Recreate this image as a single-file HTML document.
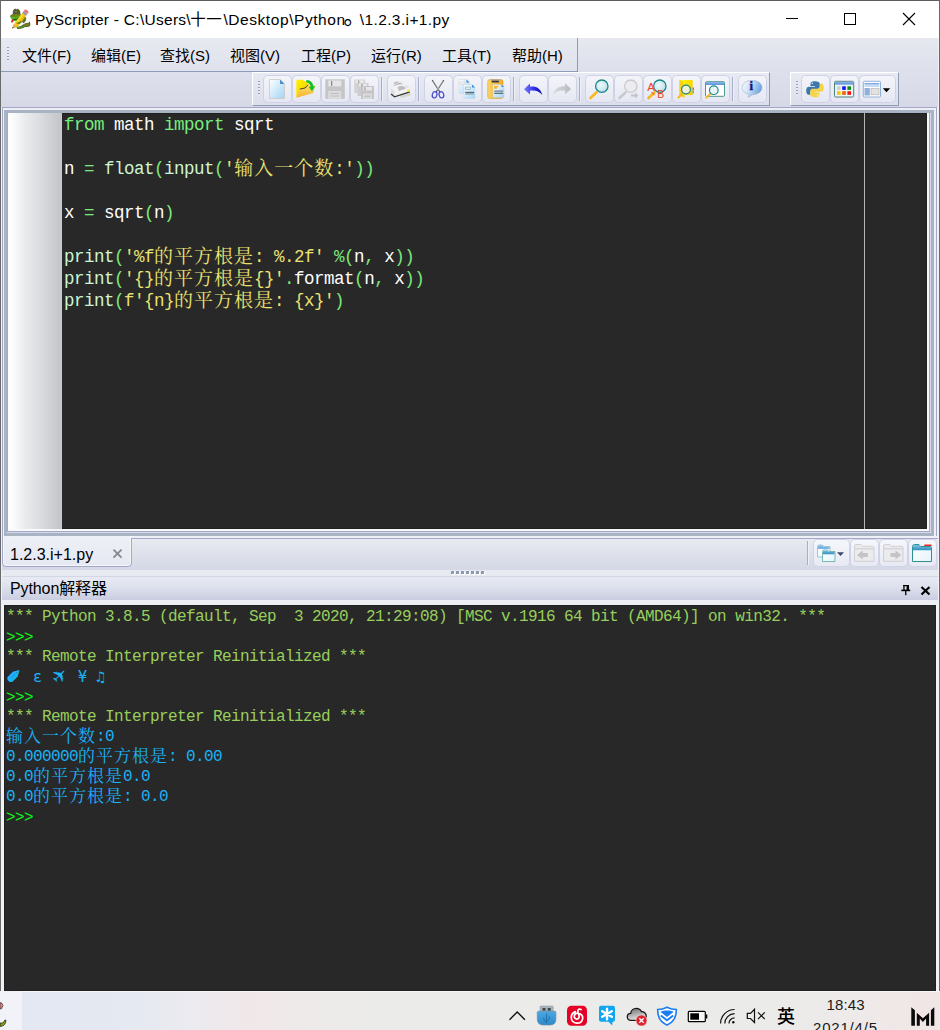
<!DOCTYPE html>
<html lang="zh-CN">
<head>
<meta charset="utf-8">
<title>PyScripter</title>
<style>
*{box-sizing:border-box;margin:0;padding:0}
html,body{width:940px;height:1030px;overflow:hidden;background:#fff}
body{position:relative;font-family:"Liberation Sans","Noto Sans CJK SC",sans-serif;font-size:15px;color:#000}
div,span.a{position:absolute}
#code span,#context span{position:static}
svg{position:absolute;left:0;top:0;overflow:visible}
/* window frame */
#wtop{left:0;top:0;width:940px;height:1px;background:#5c5c5c}
#wleft{left:0;top:0;width:1px;height:991px;background:#6a6a6a}
#wright{left:939px;top:0;width:1px;height:991px;background:#6a6a6a}
.tt{top:8.5px;height:22px;line-height:22px;font-size:15.500px;letter-spacing:0.370px;white-space:nowrap}
/* chrome */
#chrome{left:1px;top:38px;width:938px;height:953px;background:#f1f2f8}
#menubg{left:1px;top:38px;width:937px;height:69px;background:linear-gradient(#e7e9ef 0%,#e0e2ed 30%,#dcdeeb 60%,#d6d8e6 100%)}
#menubar{left:2px;top:38px;width:576px;height:34px;background:linear-gradient(#e8eaf1,#dfe1ed);border-right:1px solid #8f9bb5}
#menuline{left:1px;top:71px;width:577px;height:1px;background:#8d9bb6}
.menu{top:45px;height:22px;line-height:22px;font-size:15px;white-space:nowrap}
#toolarea{display:none}
.tbar{top:72px;height:34px;background:linear-gradient(#e8eaf3,#dcdfec);border-left:1px solid #fff;border-top:1px solid #fff;border-right:1px solid #8e9bb5;border-bottom:1px solid #8e9bb5}
.btn{top:75px;width:29px;height:28px;margin-left:-1px;border-radius:4.500px;background:linear-gradient(#f4f5fa,#e5e7f2);border:1px solid #cfd2e6}
.sep{top:77px;width:1px;height:24px;background:#a6aecb;box-shadow:1px 0 0 #eef0f7}
.grip{width:2px;height:14px;margin-top:-1px;background:repeating-linear-gradient(#9fa4c0 0,#8388a8 1.5px,rgba(255,255,255,0.35) 1.5px,rgba(255,255,255,0) 3px)}
/* editor */
#edouter{left:2px;top:107px;width:935px;height:429px;border:1px solid #a3a7c9;border-bottom:none;background:#eef0f5}
#edwhite{left:2px;top:536px;width:936px;height:2px;background:#eef0f5}
#edbot{left:132px;top:538px;width:806px;height:1px;background:#a3a7c9}
#edband{left:4px;top:110px;width:930px;height:426px;background:#a8b4c4}
#edinset{left:7px;top:113px;width:924px;height:420px;background:#d7d9e6}
#edline{left:7px;top:113px;width:923px;height:419px;border-right:1px solid #a3a7c9;border-bottom:1px solid #a3a7c9;border-left:1px solid #a3a7c9;background:#f7f9fd}
#edinner{left:8px;top:113px;width:919px;height:416px;background:#282828;box-shadow:inset 0 0 0 1px rgba(0,0,0,0.180)}
#gutter{left:0;top:0;width:54px;height:416px;background:linear-gradient(90deg,#fff 0%,#fcfcfd 8%,#eaeced 30%,#d9dbde 62%,#c3c6c9 98%,#cbd0d4 100%)}
#margin{left:856px;top:0;width:1px;height:416px;background:#b4b4b4}
#code{left:56px;top:1px;font-family:"Liberation Mono","Noto Serif CJK SC",monospace;font-size:17.5px;letter-spacing:-0.5px;line-height:22px;color:#fff;white-space:pre}
#code .c{font-family:"Noto Serif CJK SC",serif;font-size:19px;letter-spacing:1px;line-height:0;position:relative;top:0.5px}
.k{color:#78ee80}.s{color:#ebe272}.p{color:#7ce87a}.f{color:#cdf5d2}
/* tabs */
#tabbar{left:2px;top:539px;width:936px;height:31px;background:linear-gradient(#e9ebf1,#e1e3ed 35%,#d4d7e5)}
#tab{left:2px;top:536px;width:130px;height:31px;background:linear-gradient(#eef0f6,#e6e8f2);border:1px solid #a3a7c9;border-top:none;border-radius:0 0 4.500px 4.500px;box-shadow:inset 1px -1px 0 rgba(255,255,255,0.55),inset -1px 0 0 rgba(255,255,255,0.55)}
#tabcap{left:131px;top:536px;width:1px;height:2px;background:#eef0f5}
#tabtxt{left:10px;top:544px;height:22px;line-height:22px;font-size:16px;white-space:nowrap}
.tbtn{top:539px;width:29px;height:28px;margin-left:-1px;border-radius:4.500px;background:linear-gradient(#f6f7fb,#e7e9f3);border:1px solid #d0d3e7}
#splitter{left:2px;top:570px;width:936px;height:7px;background:#e8eaf1;border-bottom:1px solid #d3d6e5}
#conhead{left:2px;top:577px;width:936px;height:23px;background:linear-gradient(#e8eaf3,#dfe2ee 40%,#c9cde0)}
#conhead2{left:2px;top:600px;width:936px;height:5px;background:#eceef4}
#contitle{left:10px;top:578px;height:22px;line-height:22px;font-size:16px;letter-spacing:-0.1px;white-space:nowrap}
#console{left:4px;top:605px;width:932px;height:386px;background:#282828;box-shadow:inset 0 0 0 1px rgba(0,0,0,0.180)}
#context{left:2px;top:2px;font-family:"Liberation Mono","Noto Serif CJK SC",monospace;font-size:16px;letter-spacing:-0.6px;line-height:20px;white-space:pre;color:#98cf5c}
#context .c{font-family:"Noto Serif CJK SC",serif;font-size:17px;letter-spacing:1px;line-height:0;position:relative;top:0.5px}
#context .w{display:inline-block;width:18px;height:20px;letter-spacing:0;font-family:"DejaVu Sans",sans-serif;font-size:16px;line-height:20px;vertical-align:top}
#context .n{display:inline-block;width:9px;height:20px;letter-spacing:0;font-family:"DejaVu Sans Mono","DejaVu Sans",monospace;font-size:15px;line-height:20px;vertical-align:top}
.o{color:#1ab2f8}.g{color:#0cf814;position:relative !important;top:1px}
/* taskbar */
#taskbar{left:0;top:991px;width:940px;height:39px;box-shadow:inset 0 1px 0 rgba(255,255,255,0.600);background:linear-gradient(90deg,#e3e8f2 0,#e3e8f2 60px,#e5e9f1 130px,#ebebf0 190px,#f1e7e9 250px,#eeeaea 300px,#ebebe9 380px,#ebebe9 780px,#eeeae9 860px,#f1e6e6 920px,#f1e6e6 940px)}
#tkleft{left:0;top:991px;width:22px;height:39px;background:#f1f3f9}
.tk{font-size:15px;white-space:nowrap;color:#1a1a1a}
</style>
</head>
<body>
<div class="tt" style="left:35px;letter-spacing:0.276px">PyScripter - C:\Users\</div><div class="tt" style="left:190.200px;letter-spacing:0.600px">十一</div><div class="tt" style="left:223.400px;letter-spacing:0.571px">\Desktop\Python</div><div class="tt" style="left:343.500px;font-size:22px;top:5.500px">。</div><div class="tt" style="left:359.800px;letter-spacing:0.383px">\1.2.3.i+1.py</div>
<div id="chrome"></div>
<div id="menubg"></div>
<div id="toolarea"></div>
<div id="menubar"></div>
<div id="menuline"></div>
<div class="grip" style="left:7px;top:48px"></div>
<div class="menu" style="left:22px">文件(F)</div>
<div class="menu" style="left:91px">编辑(E)</div>
<div class="menu" style="left:160px">查找(S)</div>
<div class="menu" style="left:230px">视图(V)</div>
<div class="menu" style="left:301px">工程(P)</div>
<div class="menu" style="left:371px">运行(R)</div>
<div class="menu" style="left:442px">工具(T)</div>
<div class="menu" style="left:512px">帮助(H)</div>

<div class="tbar" style="left:252px;width:518px"></div>
<div class="grip" style="left:258px;top:82px"></div>
<div class="btn" style="left:264px"></div>
<div class="btn" style="left:293px"></div>
<div class="btn" style="left:322px"></div>
<div class="btn" style="left:351px"></div>
<div class="sep" style="left:381px"></div>
<div class="btn" style="left:388px"></div>
<div class="sep" style="left:418px"></div>
<div class="btn" style="left:425px"></div>
<div class="btn" style="left:454px"></div>
<div class="btn" style="left:483px"></div>
<div class="sep" style="left:513px"></div>
<div class="btn" style="left:520px"></div>
<div class="btn" style="left:549px"></div>
<div class="sep" style="left:579px"></div>
<div class="btn" style="left:586px"></div>
<div class="btn" style="left:615px"></div>
<div class="btn" style="left:644px"></div>
<div class="btn" style="left:673px"></div>
<div class="btn" style="left:702px"></div>
<div class="sep" style="left:732px"></div>
<div class="btn" style="left:739px"></div>

<div class="tbar" style="left:790px;width:109px"></div>
<div class="grip" style="left:796px;top:82px"></div>
<div class="btn" style="left:802px"></div>
<div class="btn" style="left:831px"></div>
<div class="btn" style="left:860px;width:37px"></div>
<svg width="940" height="40" viewBox="0 0 940 40" style="top:0">
<!-- app icon: snake with pencil -->
<g id="i-app">
<path d="M17.200 26.800c2 0.600 4 -0.300 5.800 -1.800 1.500 -1.300 3.500 -1.800 5.300 -1.500 0.800 0 1 -0.800 0.900 -1.700 0.800 1.200 1 3.300 0.200 4.300-1.500 0.900-3.200 0-4.700 0.700-2 1.300-5 2-7.700 1.400z" fill="#70801a" stroke="#222a06" stroke-width="0.600"/>
<path d="M17.300 27.200c2.300 0.300 4.500 -0.300 6.500 -1.500l0 1.300c-2 1.200-4.500 1.500-6.700 1z" fill="#3aa81a"/>
<path d="M23 16c1.500 0 2.800 1.200 2.800 3 0 1.800-1 3.200-2.300 4l-1.500 -1.500z" fill="#6c7a16" stroke="#222a06" stroke-width="0.400"/>
<path d="M13.200 13.700c-0.200 -2.300 0.300 -4.300 1.800 -4.600 0.700 -0.200 1.200 0.200 1.500 0.600 0.500 -0.500 1.300 -0.700 2 -0.300 1.200 0.700 1.500 2.500 1.600 4.300z" fill="#59661a" stroke="#222a06" stroke-width="0.500"/>
<rect x="14" y="11" width="1.500" height="2" fill="#8d93ac"/><rect x="16.600" y="11" width="1.500" height="2" fill="#8d93ac"/><rect x="14.600" y="11" width="0.600" height="2" fill="#16162c"/><rect x="17.200" y="11" width="0.600" height="2" fill="#16162c"/>
<path d="M10.200 16.300c1 -2 4 -2.800 6.500 -2.800 1.700 0 3.300 0.300 4 1.200l0.300 2.300c-3.300 1.300-7.800 1.500-10.800 -0.700z" fill="#76841c" stroke="#222a06" stroke-width="0.400"/>
<path d="M10.200 16.300c2.800 1.700 7.300 1.300 10.600 -0.700l0.500 2.600c-1 2-3.300 3-5.800 3-2.800 0-5 -1.800-5.300 -4.900z" fill="#48c422"/>
<path d="M13.500 19.200c1.800 0.500 3.800 0 5.300 -1.200" stroke="#162006" stroke-width="0.900" fill="none"/>
<path d="M10.800 21.800l1.800 -2.700 1.800 0.700-2 2.900z" fill="#d22626"/>
<path d="M12.200 28.500l1.600 -4.200 8.400 -11.300 3.800 2.700-8.400 11.200z" fill="#efbc10"/>
<path d="M14.300 23.900l8.200 -10.900 1.700 1.200-8.300 11z" fill="#f4dc24"/>
<path d="M12.200 28.500l1.600 -4.200 2.600 1.900z" fill="#e2a874"/><path d="M12.200 28.500l0.600 -1.500 0.900 0.700z" fill="#0c0c0c"/>
<path d="M22.200 13l1.300 -1.700 3.800 2.700-1.300 1.700z" fill="#9494a2"/>
<path d="M23.500 11.300l1.200 -1.600c1.500 -0.500 3.500 0.800 3.800 2.700l-1.200 1.600z" fill="#e87480"/>
<path d="M16.500 22.300c1.600 0.600 3.200 0 4.200 -1.500l1.300 1.200c-1.200 1.800-3.500 2.600-5.500 1.600z" fill="#70801a"/>
</g>
<!-- window buttons -->
<rect x="786" y="18" width="12" height="1" fill="#000"/>
<rect x="844.500" y="13.500" width="11" height="11" fill="none" stroke="#000" stroke-width="1"/>
<path d="M903 13l12 12M915 13l-12 12" stroke="#000" stroke-width="1.100" fill="none"/>
</svg>
<svg width="940" height="110" viewBox="0 0 940 110" style="top:0">
<defs>
<linearGradient id="gdoc" x1="0" y1="0" x2="1" y2="1"><stop offset="0" stop-color="#ffffff"/><stop offset="1" stop-color="#9fd4f6"/></linearGradient>
<linearGradient id="gfold" x1="0" y1="0" x2="0" y2="1"><stop offset="0" stop-color="#fde070"/><stop offset="1" stop-color="#f5b22c"/></linearGradient>
<linearGradient id="gfoldb" x1="0" y1="0" x2="1" y2="1"><stop offset="0" stop-color="#fff200"/><stop offset="1" stop-color="#f5c800"/></linearGradient>
<radialGradient id="glens" cx="0.4" cy="0.4" r="0.7"><stop offset="0" stop-color="#eef8fb"/><stop offset="1" stop-color="#b5dde8"/></radialGradient>
<linearGradient id="gundo" x1="0" y1="0" x2="1" y2="0"><stop offset="0" stop-color="#7b7bff"/><stop offset="0.6" stop-color="#2a2ae8"/><stop offset="1" stop-color="#0808a8"/></linearGradient>
<linearGradient id="gredo" x1="0" y1="0" x2="1" y2="0"><stop offset="0" stop-color="#dedee2"/><stop offset="1" stop-color="#b9b9bd"/></linearGradient>
<linearGradient id="ginfo" x1="0" y1="0" x2="1" y2="0.3"><stop offset="0" stop-color="#ffffff"/><stop offset="0.5" stop-color="#c7ddf3"/><stop offset="1" stop-color="#6ea6e0"/></linearGradient>
<linearGradient id="gclip" x1="0" y1="0" x2="1" y2="0"><stop offset="0" stop-color="#fbd468"/><stop offset="1" stop-color="#f2a81c"/></linearGradient>
<linearGradient id="gtitle" x1="0" y1="0" x2="0" y2="1"><stop offset="0" stop-color="#8db8ee"/><stop offset="1" stop-color="#5a8fd6"/></linearGradient>
</defs>
<!-- new -->
<g id="i-new"><path d="M269.5 79.5h10.5l4.5 4.5v14.5h-15z" fill="url(#gdoc)" stroke="#cfc8c0" stroke-width="0.8"/><path d="M280 79.5l4.5 4.5h-4.5z" fill="#4a8fd8"/></g>
<!-- open -->
<g id="i-open"><path d="M296.300 80.500l0.800 -0.800h5.800l1.500 1.500h4v8l-8 2-4.100 6.400z" fill="url(#gfoldb)"/><path d="M296.300 97.800l3.500 -8.700 5.200 -1.100 3.200 -3 6.800 0-1.500 8-17.200 4.800z" fill="url(#gfold)"/><path d="M299.800 89.100l5.200 -1.100 3.200 -3" fill="none" stroke="#3a3020" stroke-width="0.900"/><path d="M306.500 79.900c4.200 0.200 6.700 3 6.800 6.300h1.900l-3.200 5-3.300 -4.500h1.900c-0.200 -2.300-1.700 -4.200-4.400 -4.800z" fill="#12c224"/></g>
<!-- save (disabled) -->
<g id="i-save"><rect x="325.300" y="79.300" width="19.500" height="19.500" fill="#c5c5c7"/><rect x="328.300" y="80.500" width="13" height="5.800" fill="#e6e6e8"/><rect x="331" y="81" width="1.300" height="4.800" fill="#8c8c8e"/><rect x="328.300" y="91" width="13" height="7.800" fill="#dcdcde"/><rect x="330.300" y="93" width="9" height="1" fill="#bdbdbf"/><rect x="330.300" y="95.500" width="9" height="1" fill="#bdbdbf"/></g>
<!-- save all (disabled) -->
<g id="i-saveall"><rect x="354.200" y="79.500" width="11" height="13.500" fill="#d3d3d5"/><rect x="355.500" y="80.300" width="8" height="2.500" fill="#ececee"/><rect x="357.500" y="83" width="11" height="13" fill="#cdcdcf"/><rect x="358.800" y="83.800" width="8" height="2.500" fill="#eaeaec"/><rect x="358.200" y="80.500" width="1" height="2.300" fill="#8c8c8e"/><rect x="361" y="86" width="13" height="13" fill="#c5c5c7"/><rect x="363" y="87" width="9" height="3.500" fill="#e6e6e8"/><rect x="361.500" y="84" width="1" height="2.300" fill="#8c8c8e"/><rect x="364.500" y="87.300" width="1" height="3" fill="#8c8c8e"/><rect x="363" y="93.500" width="9" height="5.500" fill="#dcdcde"/><rect x="364.500" y="95.500" width="6" height="1.800" fill="#c2c2c4"/></g>
<!-- print -->
<g id="i-print"><path d="M393.500 82.500l3.500 -1.300 5.500 1.800 0 3.500-9 0z" fill="#dcdcde"/><path d="M394 83.300l4 -1.300M396 84.800l5 -1.800M394.500 86l4 -1.500M399 86l3 -1" stroke="#a6a6aa" stroke-width="0.800" fill="none"/><path d="M391 88.500l6 -3.800 8.500 0.300 4 2 0 4.800-15 4.800-3.500 -2.600z" fill="#f2f2f3"/><path d="M391 88.500l3.500 2.200 0 6-3.500 -2.600z" fill="#dededf"/><path d="M397.500 87.300c2 -1.500 5.500 -1.700 7.500 -0.300l0.500 2.500-6.500 2z" fill="#bfbfc2"/><path d="M405 85l4.500 2 0 2.500-3.500 1z" fill="#e2e2e4"/><path d="M399 91.500l6.500 -2 3.500 -1.300" stroke="#fff" stroke-width="0.800" fill="none"/><path d="M399.500 95.300l10.500 -3.300 0.800 3.300-9.300 2.700z" fill="#d2d6ce"/><path d="M391 94.100l3.500 2.700 15.300 -4.900" stroke="#38383a" stroke-width="1.200" fill="none"/><rect x="407.500" y="89.700" width="2.300" height="1.900" fill="#f4ec18"/></g>
<!-- cut -->
<g id="i-cut"><path d="M432.200 80l8 12.500M443.800 80l-8 12.500" stroke="#55555a" stroke-width="1.300" fill="none"/><path d="M433.500 81l5.500 9M442.500 81l-5.500 9" stroke="#d8d8dc" stroke-width="0.600" fill="none"/><ellipse cx="434.600" cy="94.800" rx="2.300" ry="3.200" transform="rotate(15 434.600 94.800)" fill="none" stroke="#4444cc" stroke-width="1.200"/><ellipse cx="441.400" cy="94.800" rx="2.300" ry="3.200" transform="rotate(-15 441.400 94.800)" fill="none" stroke="#4444cc" stroke-width="1.200"/></g>
<!-- copy -->
<g id="i-copy"><path d="M459 79.500h7.500l3 3v11h-10.500z" fill="url(#gdoc)" stroke="#d2d2d2" stroke-width="0.500"/><path d="M466.500 79.500l3 3h-3z" fill="#3f86d6"/><rect x="460" y="82" width="5" height="2.500" fill="#f4f4f4" stroke="#c0c0c0" stroke-width="0.400"/><path d="M464 84.500h8l3 3v11h-11z" fill="url(#gdoc)" stroke="#c4d4e0" stroke-width="0.500"/><path d="M472 84.500l3 3h-3z" fill="#3f86d6"/><rect x="465.500" y="87" width="5" height="2.500" fill="#d8eef8" stroke="#7a9aa8" stroke-width="0.500"/><rect x="465.200" y="91.800" width="8.800" height="1.600" fill="#5a6a74"/><rect x="465.200" y="94" width="8.800" height="0.800" fill="#9fb6c2"/></g>
<!-- paste -->
<g id="i-paste"><rect x="487.700" y="79.500" width="15.300" height="19" rx="2" fill="url(#gclip)" stroke="#d99a20" stroke-width="0.500"/><rect x="491.500" y="80.300" width="7.500" height="2.200" rx="0.800" fill="#3c3c3c"/><rect x="490.800" y="79" width="9" height="1.500" fill="#b8b098"/><path d="M493 84.500h8.500l2.500 2.500v10.500h-11z" fill="url(#gdoc)" stroke="#b9cad6" stroke-width="0.500"/><path d="M501.500 84.500l2.500 2.500h-2.500z" fill="#3f86d6"/><path d="M494 85.800h4.500v1.500h-1.500v1.500h-3z" fill="#f6b62c"/><rect x="494.200" y="90.500" width="9" height="1.200" fill="#6a7a84"/><rect x="494.200" y="92.700" width="9" height="1.200" fill="#55656f"/></g>
<!-- undo / redo -->
<g id="i-undo"><path d="M524 89.300l6 -5.800v3.200c6 -0.800 10.500 1.500 12.300 8.300-3 -3.800-7 -4.800-12.300 -4.300v3.800z" fill="url(#gundo)"/></g>
<g id="i-redo"><path d="M571 89l-6 -6v3.300c-6 -0.800-10.500 2-12.500 9.500 3 -4.500 7 -5.800 12.500 -5.300v3.800z" fill="url(#gredo)"/></g>
<!-- find -->
<g id="i-find"><path d="M596.500 92.500l-6 5.500" stroke="#f7b81e" stroke-width="2.600" stroke-linecap="round"/><circle cx="601.800" cy="86.200" r="6.200" fill="url(#glens)" stroke="#1b8a86" stroke-width="1.300"/></g>
<!-- find next (disabled) -->
<g id="i-findnext"><path d="M625.500 92.500l-6 5.500" stroke="#c9c9cd" stroke-width="2.600" stroke-linecap="round"/><circle cx="630.800" cy="86.200" r="6.200" fill="#ececf0" stroke="#cbcbcf" stroke-width="1.300"/><path d="M631 94.500h4v-2l3.500 3-3.500 3v-2h-4z" fill="#c4c4c8"/></g>
<!-- replace -->
<g id="i-repl"><path d="M654.500 92.500l-6 5.500" stroke="#f7b81e" stroke-width="2.600" stroke-linecap="round"/><circle cx="659.800" cy="86.200" r="6.200" fill="url(#glens)" stroke="#1b8a86" stroke-width="1.300"/><text x="647.300" y="91.300" font-family="Liberation Sans, sans-serif" font-size="11.500" fill="#f2401c">A</text><text x="657.300" y="98.300" font-family="Liberation Sans, sans-serif" font-size="10.500" fill="#f2401c">B</text><path d="M651.500 92l3 3.200" stroke="#f2401c" stroke-width="1" fill="none"/></g>
<!-- find in files -->
<g id="i-fif"><path d="M679.300 79.800l5.300 1.500 0 16.500-5.300 -2z" fill="#f8d018"/><path d="M682.500 80h10.200v15h-8z" fill="url(#gfoldb)"/><rect x="692.700" y="87.500" width="1" height="3" fill="#4a4ab0"/><rect x="692.700" y="91" width="1" height="2.500" fill="#10a0b0"/><path d="M682.500 93.500l-4 4" stroke="#f7b81e" stroke-width="2" stroke-linecap="round"/><circle cx="686" cy="89.500" r="4.400" fill="#f1f3d8" stroke="#1b8a86" stroke-width="1.200"/></g>
<!-- find in window -->
<g id="i-fiw"><rect x="705.500" y="81.700" width="19" height="14.600" rx="1" fill="#fff" stroke="#3c8c86" stroke-width="0.900"/><rect x="706" y="82" width="18" height="3" fill="url(#gtitle)"/><path d="M710.300 93.800l-3.800 3.800" stroke="#f7b81e" stroke-width="2" stroke-linecap="round"/><circle cx="713.800" cy="90.200" r="4.300" fill="#e9f4f8" stroke="#1b8a86" stroke-width="1.200"/></g>
<!-- info -->
<g id="i-info"><path d="M752 80.300c5.800 0 10 3.200 10 7.300 0 3.800-3.800 7-9.500 7.200l-4.300 2.500 0.800 -3c-4 -0.800-6.800 -3.500-6.800 -6.700 0 -4.100 4 -7.300 9.800 -7.300z" fill="url(#ginfo)" stroke="#9ab4d0" stroke-width="0.600"/><text x="749.500" y="90.300" font-family="Liberation Serif, serif" font-weight="bold" font-size="12.500" fill="#12128c" stroke="#12128c" stroke-width="0.500">i</text></g>
<!-- python -->
<g id="i-py"><path d="M814.700 81.200c-3.500 0-4.200 1.500-4.200 2.800v2h4.500v0.800h-6.200c-1.600 0-2.600 1.400-2.600 4 0 2.700 1 4 2.500 4h1.600v-2.300c0-1.600 1.300 -2.800 2.800 -2.800h4.400c1.300 0 2.300 -1 2.300 -2.300v-3.400c0 -1.500-1.500 -2.800-5.100 -2.800z" fill="#3a78ad"/><circle cx="812.300" cy="83.300" r="0.800" fill="#e8eef4"/><path d="M815.300 97.300c3.500 0 4.200 -1.500 4.200 -2.800v-2h-4.500v-0.800h6.200c1.600 0 2.600 -1.400 2.600 -4 0 -2.700-1 -4-2.500 -4h-1.600v2.300c0 1.600-1.300 2.800-2.800 2.800h-4.400c-1.300 0-2.300 1-2.300 2.300v3.400c0 1.500 1.500 2.800 5.100 2.800z" fill="#f6d44a"/><circle cx="817.700" cy="95.200" r="0.800" fill="#fdf6d0"/></g>
<!-- palette -->
<g id="i-pal"><rect x="834.500" y="81.300" width="19.200" height="15.700" rx="1.200" fill="#eef4f4" stroke="#4f7f80" stroke-width="1"/><rect x="835" y="81.800" width="18.200" height="2.800" fill="url(#gtitle)"/><rect x="837" y="86.300" width="3.600" height="3.600" fill="#cfcfcf"/><rect x="842.200" y="86.300" width="3.600" height="3.600" fill="#1414f0"/><rect x="847.400" y="86.300" width="3.600" height="3.600" fill="#0a8a1e"/><rect x="837" y="91.200" width="3.600" height="3.600" fill="#fcc800"/><rect x="842.200" y="91.200" width="3.600" height="3.600" fill="#e86008"/><rect x="847.400" y="91.200" width="3.600" height="3.600" fill="#f01414"/></g>
<!-- layout -->
<g id="i-lay"><rect x="863.300" y="81.300" width="17.200" height="15.700" rx="1" fill="#fff" stroke="#8fb0d8" stroke-width="1"/><rect x="864.500" y="83" width="14.800" height="1.600" fill="#7fa8e4"/><rect x="864.500" y="85.300" width="14.800" height="1.500" fill="#b4cff2"/><rect x="864.500" y="88" width="5.300" height="7.500" fill="#8fb0dc"/><rect x="871" y="88.300" width="8" height="6.500" fill="#e2e2e2" stroke="#b4b4b4" stroke-width="0.700"/><path d="M882.800 88.300h7.400l-3.700 3.900z" fill="#000"/></g>
</svg>
<div id="edouter"></div>
<div id="edwhite"></div>
<div id="edbot"></div>
<div id="edband"></div>
<div id="edinset"></div>
<div id="edline"></div>
<div id="edinner">
<div id="gutter"></div>
<div id="margin"></div>
<div id="code"><span class="k">from</span> math <span class="k">import</span> sqrt

n <span class="p">=</span> <span class="f">float</span><span class="p">(</span><span class="f">input</span><span class="p">(</span><span class="s">'<span class="c">输入一个数</span>:'</span><span class="p">))</span>

x <span class="p">=</span> sqrt<span class="p">(</span>n<span class="p">)</span>

<span class="f">print</span><span class="p">(</span><span class="s">'%f<span class="c">的平方根是</span>: %.2f'</span> <span class="p">%(</span>n<span class="p">,</span> x<span class="p">))</span>
<span class="f">print</span><span class="p">(</span><span class="s">'{}<span class="c">的平方根是</span>{}'</span><span class="p">.</span>format<span class="p">(</span>n<span class="p">,</span> x<span class="p">))</span>
<span class="f">print</span><span class="p">(</span><span class="s">f'{n}<span class="c">的平方根是</span>: {x}'</span><span class="p">)</span></div>
</div>
<div id="tabbar"></div>
<div id="tab"></div>
<div id="tabcap"></div>
<div id="tabtxt">1.2.3.i+1.py</div>
<div class="sep" style="left:807px;top:541px"></div>
<div class="tbtn" style="left:814px;width:37px"></div>
<div class="tbtn" style="left:851px"></div>
<div class="tbtn" style="left:880px"></div>
<div class="tbtn" style="left:909px"></div>
<div id="splitter"></div>
<div id="conhead"></div>
<div id="conhead2"></div>
<div id="contitle">Python解释器</div>
<div id="console">
<div id="context">*** Python 3.8.5 (default, Sep  3 2020, 21:29:08) [MSC v.1916 64 bit (AMD64)] on win32. ***
<span class="g">&gt;&gt;&gt;</span>
*** Remote Interpreter Reinitialized ***
<span class="o"><span class="w" style="font-size:17px;font-weight:bold;-webkit-text-stroke:0.9px #1ab2f8;position:relative;left:0.5px;top:-0.5px">✐</span> <span class="n">ε</span> <span class="w" style="transform:translate(3px,-2px) rotate(-45deg) scale(1.15);transform-origin:8px 11px">✈</span> <span class="n">¥</span> <span class="n">♫</span></span>
<span class="g">&gt;&gt;&gt;</span>
*** Remote Interpreter Reinitialized ***
<span class="o"><span class="c">输入一个数</span>:0</span>
<span class="o">0.000000<span class="c">的平方根是</span>: 0.00</span>
<span class="o">0.0<span class="c">的平方根是</span>0.0</span>
<span class="o">0.0<span class="c">的平方根是</span>: 0.0</span>
<span class="g">&gt;&gt;&gt;</span></div>
</div>
<svg width="940" height="70" viewBox="0 536 940 70" style="top:536px">
<defs>
<linearGradient id="gwin" x1="0" y1="0" x2="1" y2="1"><stop offset="0" stop-color="#ffffff"/><stop offset="1" stop-color="#e4f4fb"/></linearGradient>
<linearGradient id="gwt" x1="0" y1="0" x2="0" y2="1"><stop offset="0" stop-color="#7fc0ee"/><stop offset="1" stop-color="#2f8fb8"/></linearGradient>
</defs>
<!-- tab close x -->
<path d="M113.500 549.700l8 8M121.500 549.700l-8 8" stroke="#8a8a8c" stroke-width="1.900" fill="none"/>
<!-- window list -->
<g><path d="M817.500 546.500q0 -1.500 1.500 -1.500h3.500l1.500 1.500h6v10.500h-12.500z" fill="url(#gwin)" stroke="#8fb8c8" stroke-width="0.800"/><path d="M818 546.500q0 -1 1 -1h3.500l1.500 1.500h5.500v2h-11.500z" fill="#79b4e4"/><path d="M822.500 551.500q0 -1.500 1.500 -1.500h3.500l1.500 1.500h6v10h-12.500z" fill="url(#gwin)" stroke="#5aa8a2" stroke-width="0.800"/><path d="M823 551.500q0 -1 1 -1h3.500l1.500 1.500h5.500v2.200h-11.500z" fill="url(#gwt)"/><path d="M837 552.300h7l-3.500 3.700z" fill="#43466c"/></g>
<!-- back (disabled) -->
<g><path d="M854.500 546q0 -1.500 1.500 -1.500h5l1.500 1.800h10.500q1 0 1 1v14h-19.500z" fill="#ebebee" stroke="#cdcdd1" stroke-width="0.900"/><path d="M855 548.800h19" stroke="#d2d2d6" stroke-width="1.200"/><path d="M857 555l5.800 -4.600v2.700h5v3.800h-5v2.700z" fill="#c4c4c8"/></g>
<!-- forward (disabled) -->
<g><path d="M883.500 546q0 -1.500 1.500 -1.500h5l1.500 1.800h10.500q1 0 1 1v14h-19.500z" fill="#ebebee" stroke="#cdcdd1" stroke-width="0.900"/><path d="M884 548.800h19" stroke="#d2d2d6" stroke-width="1.200"/><path d="M901.300 555l-5.800 -4.600v2.700h-5v3.800h5v2.700z" fill="#c4c4c8"/></g>
<!-- close tab -->
<g><path d="M912.500 546.500q0 -2 2 -2h4.500l1.500 2h9.500q1.500 0 1.500 1.500v13.500h-19z" fill="url(#gwin)" stroke="#2c9490" stroke-width="1"/><path d="M913 546.500q0 -1.500 1.500 -1.500h4.500l1.500 2h9.500q1 0 1 1v2.300h-18z" fill="url(#gwt)"/><rect x="924.200" y="544.500" width="7.500" height="1.600" rx="0.500" fill="#f02828"/></g>
<!-- splitter dots -->
<g fill="#fff"><rect x="452" y="572" width="3" height="3"/><rect x="457" y="572" width="3" height="3"/><rect x="462" y="572" width="3" height="3"/><rect x="467" y="572" width="3" height="3"/><rect x="472" y="572" width="3" height="3"/><rect x="477" y="572" width="3" height="3"/><rect x="482" y="572" width="3" height="3"/></g>
<g fill="#8d9aae"><rect x="451" y="571" width="3" height="3"/><rect x="456" y="571" width="3" height="3"/><rect x="461" y="571" width="3" height="3"/><rect x="466" y="571" width="3" height="3"/><rect x="471" y="571" width="3" height="3"/><rect x="476" y="571" width="3" height="3"/><rect x="481" y="571" width="3" height="3"/></g>
<!-- pin -->
<g fill="#000"><rect x="903" y="585" width="6" height="1.200"/><rect x="903.300" y="585" width="1.300" height="5"/><rect x="906.600" y="585" width="2.400" height="5"/><rect x="901.300" y="589.600" width="8.900" height="1.600"/><rect x="905.100" y="591" width="1.300" height="4.200"/></g>
<!-- close x -->
<path d="M921.500 587l8 7.500M929.500 587l-8 7.500" stroke="#000" stroke-width="2.200" fill="none"/>
</svg>
<div id="taskbar"></div>
<div id="tkleft"></div>
<svg width="940" height="40" viewBox="0 990 940 40" style="top:990px">
<defs>
<linearGradient id="gusb" x1="0" y1="0" x2="0" y2="1"><stop offset="0" stop-color="#4aa8e4"/><stop offset="1" stop-color="#2f88c8"/></linearGradient>
<linearGradient id="gcloud" x1="0" y1="0" x2="0.3" y2="1"><stop offset="0" stop-color="#6a6a6a"/><stop offset="1" stop-color="#e4e4e4"/></linearGradient>
</defs>
<!-- left fragment -->
<path d="M0 1002.800l1.500 0 1.500 2.700-1.500 3.300-1.500 0z" fill="#e08484" stroke="#3a2a2a" stroke-width="0.700"/><path d="M0 1023c2.500 0.500 4 -0.500 4.500 -2.500l1.300 -0.500c0.300 3.500-2 6.500-5.800 6.300z" fill="#84a01c" stroke="#1c2406" stroke-width="0.800"/>
<!-- chevron -->
<path d="M509.500 1019.700l7.700 -7.700 7.700 7.700" fill="none" stroke="#111" stroke-width="1.400"/>
<!-- usb -->
<g><rect x="540" y="1006" width="13.200" height="7" rx="0.800" fill="#a9b4bc" stroke="#8a949c" stroke-width="0.500"/><rect x="542.500" y="1008" width="3" height="2.800" fill="#3c444c"/><rect x="547.700" y="1008" width="3" height="2.800" fill="#3c444c"/><path d="M537.300 1012.500q0 -1.300 1.300 -1.300h16q1.300 0 1.300 1.300v6.500q0 6-6 6h-6.600q-6 0-6 -6z" fill="url(#gusb)" stroke="#6a8ca4" stroke-width="0.700"/><path d="M546.600 1013.500v9M546.600 1022.500l-2.800 -3v-2M546.600 1021l2.800 -2.500v-2" fill="none" stroke="#1f6aa8" stroke-width="0.900"/></g>
<!-- netease -->
<g><rect x="567" y="1005.800" width="20" height="20" rx="4.500" fill="#e60026"/><path d="M578.500 1009.500c-1.500 1.800-0.500 3.800 0.300 5.500 1 2.300-0.300 4-2 4-1.700 0-2.800 -1.500-2.500 -3.200 0.300 -1.700 2 -2.800 4 -2.500 3 0.300 4.800 2.800 4.300 5.500-0.500 2.800-3 4.500-6 4.300-3.300 -0.300-5.500 -3-5.300 -6.200 0.200 -2.500 1.800 -4.500 4 -5.300M578.300 1009.700c0.800 -0.700 1.800 -0.700 2.700 -0.200" fill="none" stroke="#fff" stroke-width="1.750" stroke-linecap="round"/></g>
<!-- blue star bubble -->
<g><path d="M601 1005.800h12q2 0 2 2v12q0 2-2 2h-0.500l-0.300 3.800-3.700 -3.800h-7.500q-2 0-2 -2v-12q0 -2 2 -2z" fill="#12a6f2"/><path d="M607 1008.800v10.400M602.200 1011.200l9.600 5.600M611.800 1011.200l-9.600 5.600" stroke="#fff" stroke-width="2.400" stroke-linecap="round"/></g>
<!-- cloud with error -->
<g><path d="M631 1020.300c-2.300 0-3.700 -1.600-3.700 -3.500 0 -2 1.600 -3.400 3.400 -3.400 0.300 -2.900 2.700 -5 5.600 -5 2.400 0 4.300 1.300 5.200 3.300 2.500 -0.200 4.700 1.700 4.700 4.300 0 2.500-1.900 4.300-4.300 4.300z" fill="url(#gcloud)" stroke="#1a1a1a" stroke-width="1.300"/><circle cx="641.500" cy="1020.500" r="5.500" fill="#e0202c" stroke="#ececec" stroke-width="0.500"/><path d="M639.300 1018.300l4.400 4.400M643.700 1018.300l-4.400 4.400" stroke="#fff" stroke-width="1.300"/></g>
<!-- shield -->
<g><path d="M667 1007.200c2.800 1.500 6 2.300 9.300 2.300 0.300 6.500-2.300 12.300-9.300 15.500-7 -3.200-9.600 -9-9.300 -15.500 3.300 0 6.500 -0.800 9.300 -2.300z" fill="#fff" stroke="#1c7cf2" stroke-width="1.600"/><path d="M660.300 1011.800c4 -1.800 9.400 -1.800 13.400 0l-6.700 5.200z" fill="#1c7cf2"/><path d="M660.800 1015.500l6.200 4.800 6.200 -4.800" fill="none" stroke="#1c7cf2" stroke-width="1.900"/></g>
<!-- battery -->
<g><rect x="688.300" y="1011.300" width="17" height="10.400" rx="1" fill="#fff" fill-opacity="0.600" stroke="#000" stroke-width="1.200"/><rect x="690.300" y="1013.300" width="8.700" height="6.400" fill="#000"/><rect x="706" y="1014.500" width="1.300" height="4" fill="#000"/></g>
<!-- wifi -->
<g fill="none" stroke="#111" stroke-width="1.200"><path d="M720.600 1023.500a14 14 0 0 1 14 -14"/><path d="M724.800 1023.500a9.800 9.800 0 0 1 9.800 -9.800"/><path d="M729 1023.500a5.600 5.600 0 0 1 5.600 -5.600"/><circle cx="733.300" cy="1022.300" r="1.200" fill="#111" stroke="none"/></g>
<!-- volume muted -->
<g fill="none" stroke="#111" stroke-width="1.200"><path d="M747.300 1013.300h3.200l4 -4v13.200l-4 -4h-3.200z"/><path d="M758 1012.300l6.800 6.800M764.800 1012.300l-6.800 6.800"/></g>
<!-- brand -->
<g fill="#0a0a0a"><path d="M911.300 1007.200l3.600 3v15.500h-3.600z"/><path d="M934.300 1007.200l-3.400 3v15.500h3.400z"/><path d="M916.800 1012.800l6.100 5.500 6.200 -5.500v12.900h-3v-7.300l-3.200 3.700-3.100 -3.700v7.300h-3z"/></g>
</svg>
<div class="tk" style="left:777px;top:1007px;font-size:18px;line-height:20px;color:#000;font-weight:500">英</div>
<div class="tk" style="left:826.500px;top:995px;line-height:20px;letter-spacing:0.160px">18:43</div>
<div class="tk" style="left:813px;top:1018px;line-height:20px;letter-spacing:0.800px">2021/4/5</div>
<div id="wtop"></div>
<div id="wleft"></div>
<div id="wright"></div>
</body>
</html>
